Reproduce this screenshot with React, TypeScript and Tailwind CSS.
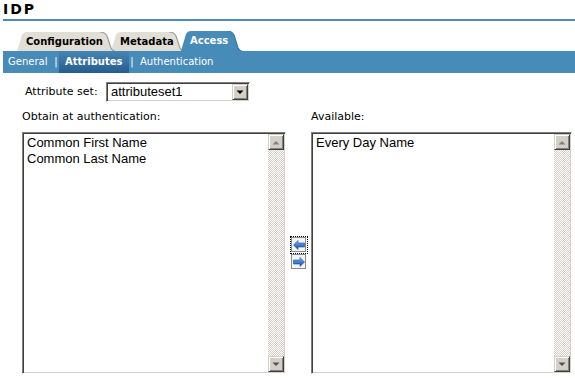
import React from "react";

const sunken =
  "border border-t-[#808080] border-l-[#808080] border-r-[#ffffff] border-b-[#ffffff] shadow-[inset_1px_1px_0_#404040,inset_-1px_-1px_0_#d4d0c8]";
const raised =
  "border border-t-[#d4d0c8] border-l-[#d4d0c8] border-r-[#404040] border-b-[#404040] shadow-[inset_1px_1px_0_#ffffff,inset_-1px_-1px_0_#808080] bg-[#d4d0c8]";

function Tab({
  label,
  width,
  active,
  className,
}: {
  label: string;
  width: number;
  active?: boolean;
  className?: string;
}) {
  const h = active ? 20 : 19;
  const w = width;
  const d = `M0,${h} L5,3 Q6.5,0 10,0 L${w - 15},0 Q${w - 10},0 ${w - 8},4 L${w - 4},${h - 3} Q${w - 2.5},${h} ${w},${h} Z`;
  const edge = `M${w - 15},0 Q${w - 10},0 ${w - 8},4 L${w - 4},${h - 3} Q${w - 2.5},${h} ${w},${h}`;
  return (
    <div className={`relative flex h-[20px] items-end ${className ?? ""}`} style={{ width: w }}>
      <svg className="absolute bottom-0 left-0" width={w} height={h} viewBox={`0 0 ${w} ${h}`}>
        <path d={d} fill={active ? "#478bb9" : "#e1ded5"} />
        <path d={edge} fill="none" stroke={active ? "#3a78a5" : "#a09d94"} strokeWidth="1.2" />
      </svg>
      <span
        className={`relative pl-[9px] text-[10px] font-bold leading-[19px] ${active ? "text-white pb-[1px]" : "text-black"}`}
      >
        {label}
      </span>
    </div>
  );
}

function ScrollArrow({ up }: { up?: boolean }) {
  return (
    <div className={`flex h-[16px] w-[16px] items-center justify-center ${raised}`}>
      <svg width="8" height="5" viewBox="0 0 8 5">
        {up ? (
          <path d="M0.5,4.5 L4,1 L7.5,4.5 Z" fill="#808080" />
        ) : (
          <path d="M0.5,0.5 L7.5,0.5 L4,4 Z" fill="#505050" />
        )}
      </svg>
    </div>
  );
}

function Scrollbar() {
  return (
    <div className="flex w-[16px] flex-col">
      <ScrollArrow up />
      <div className="flex-1 bg-[image:repeating-conic-gradient(#d4d0c8_0%_25%,#ffffff_0%_50%)] bg-[length:2px_2px]" />
      <ScrollArrow />
    </div>
  );
}

function ListBox({ items, className }: { items: string[]; className?: string }) {
  return (
    <div className={`flex h-[242px] bg-white p-[1px] ${sunken} ${className ?? ""}`}>
      <div className="flex-1 pl-[3px] pt-[1px] font-['Liberation_Sans',Arial,sans-serif] text-[13px] leading-[16px] text-black">
        {items.map((t) => (
          <div key={t}>{t}</div>
        ))}
      </div>
      <Scrollbar />
    </div>
  );
}

function MoveButton({ dir, focused }: { dir: "left" | "right"; focused?: boolean }) {
  return (
    <div
      className={`flex h-[16px] w-[16px] items-center justify-center ${
        focused ? "outline-1 outline-dotted outline-black" : ""
      }`}
    >
      <div className="flex h-[15px] w-[15px] items-center justify-center border border-[#8a8a8a] bg-[#f4f4f4]">
        <svg width="12" height="10" viewBox="0 0 12 10">
          <defs>
            <linearGradient id={`g-${dir}`} x1="0" y1="0" x2="0" y2="1">
              <stop offset="0" stopColor="#8fc0f0" />
              <stop offset="0.5" stopColor="#3b7fd0" />
              <stop offset="1" stopColor="#1c4f9a" />
            </linearGradient>
          </defs>
          {dir === "left" ? (
            <path
              d="M0.5,5 L5,0.5 L5,3 L11.5,3 L11.5,7 L5,7 L5,9.5 Z"
              fill={`url(#g-${dir})`}
              stroke="#1c4f9a"
              strokeWidth="0.6"
            />
          ) : (
            <path
              d="M11.5,5 L7,0.5 L7,3 L0.5,3 L0.5,7 L7,7 L7,9.5 Z"
              fill={`url(#g-${dir})`}
              stroke="#1c4f9a"
              strokeWidth="0.6"
            />
          )}
        </svg>
      </div>
    </div>
  );
}

export default function App() {
  return (
    <div className="relative h-[378px] w-[575px] overflow-hidden bg-white font-['DejaVu_Sans',Verdana,sans-serif] text-black">
      {/* Title */}
      <div className="h-[19px] pl-[3px] text-[14px] font-bold leading-[19px] tracking-[2px]">IDP</div>
      <div className="ml-[3px] h-[2px] bg-[#4a8ab9]" />

      {/* Tabs */}
      <div className="mt-[10px] flex h-[20px] items-end pl-[17px]">
        <Tab label="Configuration" width={98} className="z-[2]" />
        <Tab label="Metadata" width={73} className="z-[1] -ml-[4px]" />
        <Tab label="Access" width={61} active className="z-[3] -ml-[3px]" />
      </div>

      {/* Sub navigation */}
      <div className="ml-[3px] flex h-[22px] items-stretch bg-[#478bb9] pl-[5px] text-[10px] leading-[22px] text-white">
        <span className="w-[45px]">General</span>
        <span className="w-[6px] text-center">|</span>
        <span className="w-[70px] bg-gradient-to-b from-[#4585b3] to-[#275d8e] pl-[6px] font-bold">Attributes</span>
        <span className="w-[6px] text-center">|</span>
        <span className="pl-[5px]">Authentication</span>
      </div>

      {/* Attribute set */}
      <div className="mt-[9px] flex h-[20px] items-center pl-[25px] text-[11px]">
        <span className="w-[81px]">Attribute set:</span>
        <div className={`flex h-[20px] w-[144px] items-center bg-white p-[1px] ${sunken}`}>
          <span className="flex-1 pl-[3px] font-['Liberation_Sans',Arial,sans-serif] text-[13px] leading-[16px]">
            attributeset1
          </span>
          <div className={`flex h-[16px] w-[16px] items-center justify-center ${raised}`}>
            <svg width="8" height="5" viewBox="0 0 8 5">
              <path d="M0.5,0.5 L7.5,0.5 L4,4 Z" fill="#000000" />
            </svg>
          </div>
        </div>
      </div>

      {/* Labels */}
      <div className="mt-[8px] flex h-[14px] text-[11px] leading-[14px]">
        <span className="w-[311px] pl-[22px]">Obtain at authentication:</span>
        <span>Available:</span>
      </div>

      {/* Lists */}
      <div className="mt-[8px] flex pl-[22px]">
        <ListBox items={["Common First Name", "Common Last Name"]} className="w-[264px]" />
        <div className="flex w-[25px] flex-col items-center justify-center">
          <MoveButton dir="left" focused />
          <div className="h-[1px]" />
          <MoveButton dir="right" />
        </div>
        <ListBox items={["Every Day Name"]} className="w-[261px]" />
      </div>
    </div>
  );
}
